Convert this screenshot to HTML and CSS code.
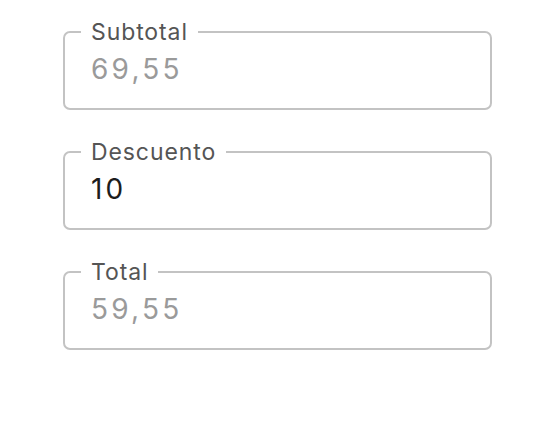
FILE: index.html
```html
<!DOCTYPE html>
<html lang="es">
<head>
<meta charset="utf-8">
<link rel="stylesheet" href="styles.css">
</head>
<body>
<form class="form">
  <fieldset class="field">
    <legend class="field-label">Subtotal</legend>
    <input class="field-input is-readonly" type="text" value="69,55" readonly>
  </fieldset>
  <fieldset class="field">
    <legend class="field-label">Descuento</legend>
    <input class="field-input" type="text" value="10">
  </fieldset>
  <fieldset class="field">
    <legend class="field-label">Total</legend>
    <input class="field-input is-readonly" type="text" value="59,55" readonly>
  </fieldset>
</form>
</body>
</html>
```
FILE: styles.css
```css
html, body {
  margin: 0;
  padding: 0;
  background: #ffffff;
}
body {
  font-family: Inter, "Noto Sans", sans-serif;
}
.form {
  display: flex;
  flex-direction: column;
  gap: 30px;
  padding: 20px 0 0 63px;
  width: 429px;
}
.field {
  margin: 0;
  border: 2px solid #c3c3c3;
  border-radius: 7px;
  padding: 0 16px 21px;
}
.field-label {
  padding: 0 10px;
  font-size: 23px;
  line-height: 24px;
  color: #555555;
  letter-spacing: 0.9px;
}
.field-input {
  display: block;
  width: 100%;
  box-sizing: border-box;
  border: none;
  outline: none;
  background: transparent;
  padding: 0 10px;
  margin: 7px 0 0;
  font-family: inherit;
  font-size: 28px;
  line-height: 36px;
  height: 36px;
  letter-spacing: 3.2px;
  color: #1c1c1c;
}
.field-input.is-readonly {
  color: #9a9a9a;
}
```
